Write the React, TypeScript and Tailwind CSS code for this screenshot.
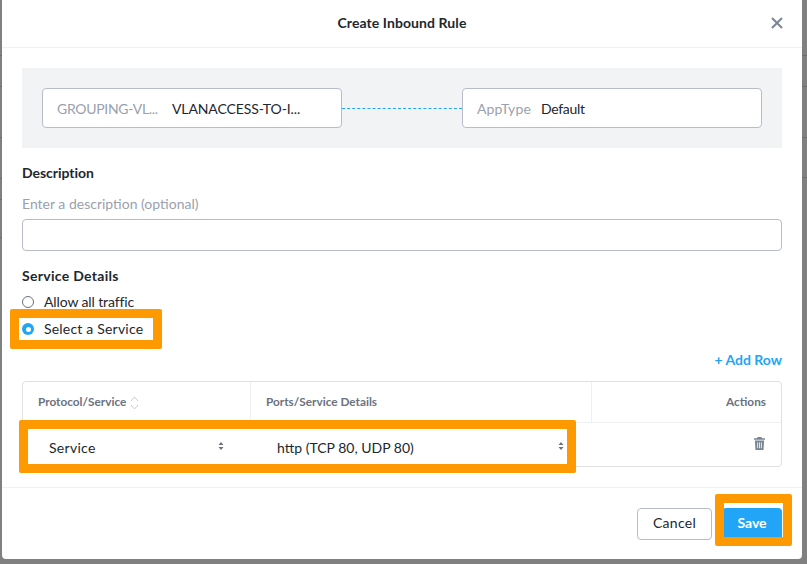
const font = { fontFamily: "Lato, 'Open Sans', sans-serif" };

function Chevrons({ className }: { className: string }) {
  return (
    <svg width="6" height="10" viewBox="0 0 6 10" className={className}>
      <path d="M3 1 5.5 4H.5Z M3 9 .5 6h5Z" fill="#6b7280" />
    </svg>
  );
}

function EdgeLines({ rows }: { rows: number[] }) {
  return (
    <div className="w-[5px] flex flex-col">
      {rows.map((h, i) => (
        <div key={i} className="border-b border-[#6f6f6f]" style={{ height: h }} />
      ))}
    </div>
  );
}

export default function App() {
  return (
    <div className="relative w-[807px] h-[564px] overflow-hidden bg-[#808080] text-[14px] text-[#22272e]" style={font}>
      <div className="absolute inset-0 flex justify-between">
        <EdgeLines rows={[56, 31, 51, 41, 21, 38]} />
        <EdgeLines rows={[56, 31, 51, 40]} />
      </div>
      <div className="relative ml-[2px] w-[800px] h-[559px] bg-white rounded-b-[4px] flex flex-col">
        <div className="h-[48px] shrink-0 border-b border-[#f0f1f3] flex items-center justify-center relative">
          <span className="font-bold text-[14px] tracking-[0.08px] pb-[2px]">Create Inbound Rule</span>
          <svg width="12" height="12" viewBox="0 0 12 12" className="absolute left-[769px] top-[17px]">
            <path d="M1 1l10 10M11 1 1 11" stroke="#7a8594" strokeWidth="2" />
          </svg>
        </div>
        <div className="px-5 pt-5 flex-1 flex flex-col">
          <div className="h-[80px] bg-[#f2f3f5] flex items-center px-5">
            <div className="w-[300px] h-[40px] bg-white border border-[#b8bcca] rounded-[4px] flex items-center px-[14px] text-[14px]">
              <span className="text-[#9aa1ad] w-[115px] tracking-[-0.3px]">GROUPING-VL...</span>
              <span className="text-[#22272e] tracking-[-0.12px]">VLANACCESS-TO-I...</span>
            </div>
            <div className="w-[120px] border-t border-dashed border-[#22a5f7]" />
            <div className="w-[300px] h-[40px] bg-white border border-[#b8bcca] rounded-[4px] flex items-center px-[14px] text-[14px]">
              <span className="text-[#9aa1ad] w-[64px] tracking-[0.15px]">AppType</span>
              <span className="tracking-[-0.3px]">Default</span>
            </div>
          </div>
          <div className="mt-[16px] font-bold text-[14px] leading-[18px] tracking-[-0.03px]">Description</div>
          <div className="mt-[13px] text-[#9aa1ad] text-[14px] leading-[18px]">Enter a description (optional)</div>
          <div className="mt-[6px] h-[32px] border border-[#b8bcca] rounded-[4px]" />
          <div className="mt-[16px] font-bold text-[14px] leading-[18px] tracking-[0.3px]">Service Details</div>
          <div className="mt-[8px] flex items-center gap-[10px] h-[18px] leading-[18px]">
            <span className="w-[12px] h-[12px] rounded-full border border-[#6b7280] bg-white" />
            <span className="tracking-[-0.12px]">Allow all traffic</span>
          </div>
          <div className="mt-[9px] flex items-center gap-[10px] h-[18px] leading-[18px]">
            <span className="w-[12px] h-[12px] rounded-full bg-[#22a5f7] flex items-center justify-center">
              <span className="w-[5px] h-[5px] rounded-full bg-white" />
            </span>
            <span className="tracking-[0.2px]">Select a Service</span>
          </div>
          <div className="mt-[13px] text-right text-[#22a5f7] font-bold text-[14px] leading-[18px]">+ Add Row</div>
          <div className="mt-[12px] h-[86px] border border-[#dfe1e6] rounded-[4px] flex flex-col">
            <div className="h-[41px] flex border-b border-[#eff0f2] text-[11.8px] font-bold text-[#6b7280]">
              <div className="w-[228px] border-r border-[#eff0f2] pl-[15px] flex items-center gap-[4px]">
                Protocol/Service
                <svg width="9" height="14" viewBox="0 0 9 14" className="mt-[2px]"><path d="M1 5l3.5-4L8 5M1 9l3.5 4L8 9" fill="none" stroke="#c9ccd4" /></svg>
              </div>
              <div className="w-[341px] border-r border-[#eff0f2] pl-[15px] flex items-center">Ports/Service Details</div>
              <div className="flex-1 flex items-center justify-end pr-[15px]">Actions</div>
            </div>
            <div className="flex-1 flex items-center justify-end pr-[16px]">
              <svg width="11" height="13" viewBox="0 0 11 13" className="mb-[2px]">
                <path d="M3.6 0h3.8l.6 1.2H11v1.6H0V1.2h3ZM.9 3.6h9.2l-.6 9.4H1.5Z" fill="#7a8594" />
                <path d="M3.6 5.4v5.8M5.5 5.4v5.8M7.4 5.4v5.8" stroke="#fff" strokeWidth=".8" />
              </svg>
            </div>
          </div>
        </div>
        <div className="h-[72px] shrink-0 border-t border-[#f0f1f3] flex items-center justify-end gap-[10px] px-5">
          <button className="w-[75px] h-[32px] border border-[#b8bcca] rounded-[4px] bg-white text-[14px] tracking-[0.3px] pb-[2px]">Cancel</button>
          <button className="w-[60px] h-[32px] bg-[#22a5f7] rounded-[4px] text-white font-bold text-[14px] pb-[2px]">Save</button>
        </div>
      </div>

      <div className="absolute left-[10px] top-[309px] w-[152px] h-[40px] border-[9px] border-[#ff9900] rounded-[2px]" />
      <div className="absolute left-[19px] top-[420px] w-[557px] h-[53px] border-[9px] border-[#ff9900] rounded-[2px] bg-white flex items-center text-[14px]">
        <span className="ml-[21px] mt-[2px] tracking-[0.3px]">Service</span>
        <Chevrons className="absolute left-[190px] top-[12px]" />
        <span className="absolute left-[249px] top-[8px]">http (TCP 80, UDP 80)</span>
        <Chevrons className="absolute left-[530px] top-[12px]" />
      </div>
      <div className="absolute left-[715px] top-[494px] w-[77px] h-[52px] border-[9px] border-[#ff9900] rounded-[2px]" />
    </div>
  );
}
